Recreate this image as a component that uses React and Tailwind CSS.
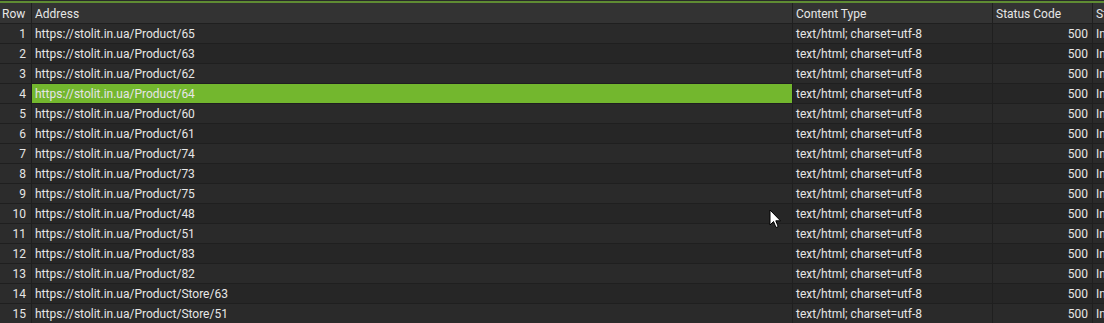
import React from 'react';

const paths = ['65', '63', '62', '64', '60', '61', '74', '73', '75', '48', '51', '83', '82', 'Store/63', 'Store/51'];

const App = () => {
    return (
        <div className="relative w-[1104px] h-[323px] overflow-hidden bg-[#262626] text-[12px] text-[#e6e6e6]" style={{ fontFamily: 'Roboto, "Liberation Sans", sans-serif' }}>
            <div className="h-px bg-[#2a2a2a]" />
            <div className="h-[2px] bg-[#5f8c33]" />
            <div className="flex h-[21px] bg-[#333333] border-b border-[#1f1f1f] overflow-hidden">
                <div className="w-[32px] shrink-0 pl-[2px] leading-[23px] border-r border-[#1f1f1f]">Row</div>
                <div className="w-[761px] shrink-0 pl-[3px] leading-[23px] border-r border-[#1f1f1f]">Address</div>
                <div className="w-[200px] shrink-0 pl-[3px] leading-[23px] border-r border-[#1f1f1f]">Content Type</div>
                <div className="w-[100px] shrink-0 pl-[3px] leading-[23px] border-r border-[#1f1f1f]">Status Code</div>
                <div className="flex-1 pl-[3px] leading-[23px] overflow-hidden whitespace-nowrap">Status</div>
            </div>
            {paths.map((p, index) => {
                const selected = index === 3;
                return (
                    <div key={index} className={'flex h-[20px] overflow-hidden border-b border-[#1f1f1f] ' + (index % 2 === 0 ? 'bg-[#2a2a2a]' : 'bg-[#262626]')}>
                        <div className="w-[32px] shrink-0 pr-[5px] text-right leading-[21px] border-r border-[#1f1f1f] bg-[#2c2c2c]">{index + 1}</div>
                        <div className={'w-[761px] shrink-0 pl-[3px] leading-[21px] border-r border-[#1f1f1f] ' + (selected ? 'bg-[#73b72e]' : '')}>
                            https://stolit.in.ua/Product/{p}
                        </div>
                        <div className="w-[200px] shrink-0 pl-[3px] leading-[21px] border-r border-[#1f1f1f]">text/html; charset=utf-8</div>
                        <div className="w-[100px] shrink-0 pr-[4px] text-right leading-[21px] border-r border-[#1f1f1f]">500</div>
                        <div className="flex-1 pl-[3px] leading-[21px] overflow-hidden whitespace-nowrap">Internal Server Error</div>
                    </div>
                );
            })}
            <svg className="absolute left-[769px] top-[209px]" width="13" height="20" viewBox="0 0 13 20">
                <path d="M1 1 L1 16 L4.5 12.5 L7 18.5 L9.2 17.6 L6.8 11.8 L11.5 11.8 Z" fill="#ffffff" stroke="#000000" strokeWidth="1" strokeLinejoin="round" />
            </svg>
        </div>
    );
};

export default App;
